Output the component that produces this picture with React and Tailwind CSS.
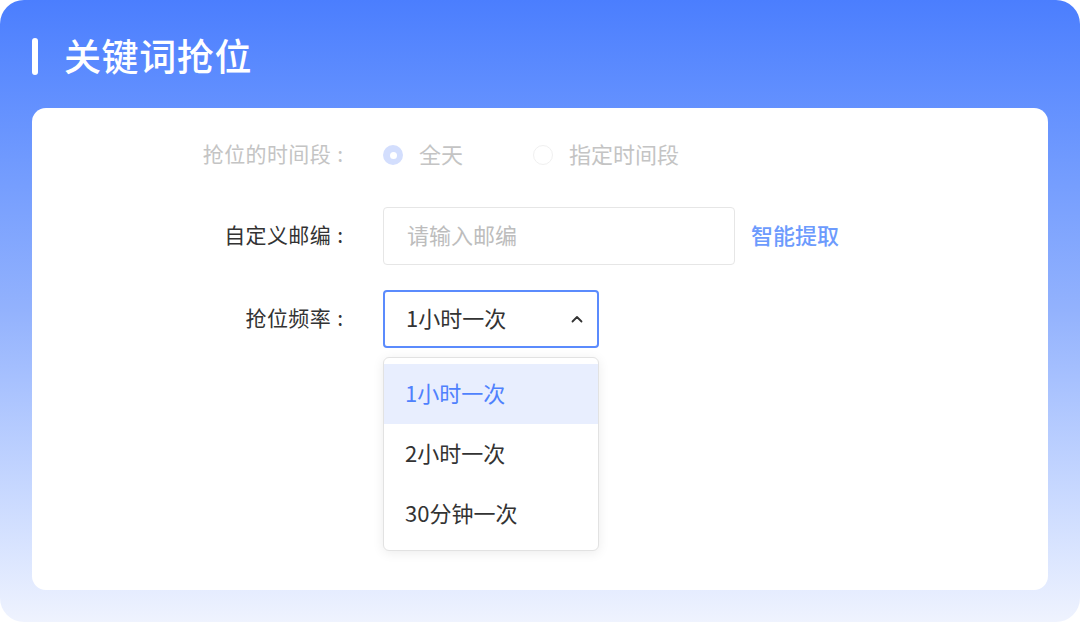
import React, { useState } from "react";

const options = ["1小时一次", "2小时一次", "30分钟一次"];

const Radio = ({ checked }) => (
  <span
    className={
      checked
        ? "flex h-5 w-5 items-center justify-center rounded-full bg-[#d3defd]"
        : "h-5 w-5 rounded-full border border-[#f0f0f0] bg-white"
    }
  >
    {checked && <span className="h-[7px] w-[7px] rounded-full bg-white" />}
  </span>
);

const Label = ({ text, faded, className = "" }) => (
  <label
    className={`flex w-[311px] shrink-0 items-center justify-end pb-[4px] text-[21px] tracking-[0.4px] ${
      faded ? "text-[#c4c4c4]" : "text-[#333]"
    } ${className}`}
  >
    {text}
    <span className="ml-[6px] tracking-normal">:</span>
  </label>
);

const App = () => {
  const [freq, setFreq] = useState(options[0]);

  return (
    <div
      className="h-[622px] w-[1080px] overflow-hidden rounded-[24px] bg-linear-to-b from-[#4b7efe] via-[#93b2fd] to-[#eff3fe] px-8"
      style={{ fontFamily: '"Noto Sans CJK SC", "Noto Sans", sans-serif' }}
    >
      {/* Title */}
      <div className="flex h-[108px] items-center pt-[4px]">
        <span className="h-[37px] w-[6px] rounded-full bg-white" />
        <h1 className="ml-[26px] pb-[2px] text-[37px] font-medium leading-none tracking-[0.6px] text-white">
          关键词抢位
        </h1>
      </div>

      {/* Card */}
      <div className="h-[482px] rounded-[14px] bg-white pt-[27px]">
        {/* Time range */}
        <div className="flex h-[40px] items-center leading-none">
          <Label text="抢位的时间段" faded />
          <div className="ml-[40px] flex items-center">
            <Radio checked />
            <span className="ml-[16px] pb-[4px] text-[22px] text-[#c4c4c4]">全天</span>
          </div>
          <div className="ml-[70px] flex items-center">
            <Radio />
            <span className="ml-[16px] pb-[4px] text-[22px] text-[#c4c4c4]">指定时间段</span>
          </div>
        </div>

        {/* Zip code */}
        <div className="mt-[32px] flex items-center leading-none">
          <Label text="自定义邮编" />
          <input
            type="text"
            placeholder="请输入邮编"
            className="ml-[40px] h-[58px] w-[352px] rounded-[4px] border border-[#e6e6e6] px-[23px] pb-[4px] text-[22px] text-[#333] placeholder:text-[#bdbdbd] focus:outline-none"
          />
          <button className="ml-[16px] pb-[4px] text-[22px] font-medium text-[#6d9bfd]">智能提取</button>
        </div>

        {/* Frequency */}
        <div className="mt-[25px] flex items-start leading-none">
          <Label text="抢位频率" className="h-[58px]" />
          <div className="relative ml-[40px] w-[216px]">
            <button className="flex h-[58px] w-full items-center justify-between rounded-[4px] border-2 border-[#5b8bfd] pl-[21px] pr-[14px] text-[22px] text-[#333]">
              <span className="pb-[4px]">{freq}</span>
              <svg width="12" height="8" viewBox="0 0 12 8" fill="none">
                <path
                  d="M1.5 6.5L6 2L10.5 6.5"
                  stroke="#333"
                  strokeWidth="1.8"
                  strokeLinecap="round"
                  strokeLinejoin="round"
                />
              </svg>
            </button>
            <ul className="absolute left-0 top-[67px] w-full rounded-[6px] border border-[#e2e2e2] bg-white py-[6px] text-[22px] shadow-[0_2px_12px_rgba(0,0,0,0.08)]">
              {options.map((o) => (
                <li
                  key={o}
                  onClick={() => setFreq(o)}
                  className={
                    o === freq
                      ? "flex h-[60px] items-center bg-[#e8eefe] px-[21px] pb-[4px] text-[#4f81fd]"
                      : "flex h-[60px] items-center px-[21px] pb-[4px] text-[#333]"
                  }
                >
                  {o}
                </li>
              ))}
            </ul>
          </div>
        </div>
      </div>
    </div>
  );
};

export default App;
